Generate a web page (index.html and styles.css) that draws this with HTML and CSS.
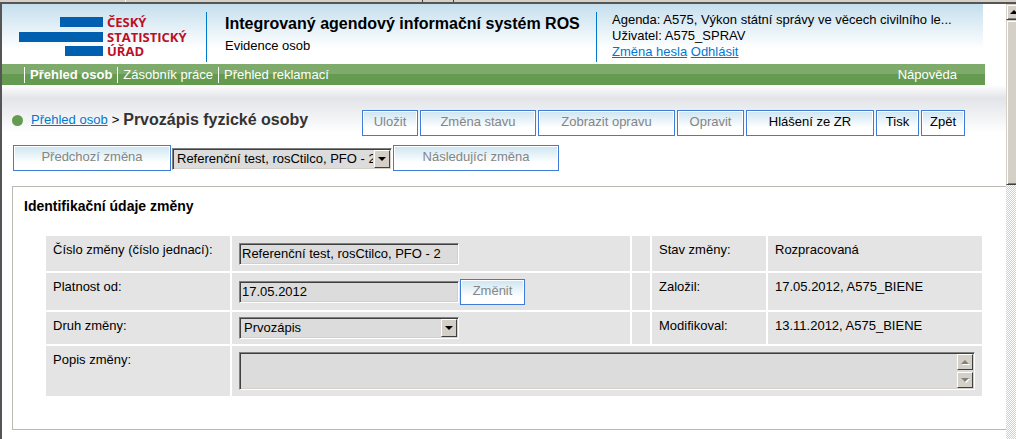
FILE: index.html
```html
<!DOCTYPE html>
<html lang="cs">
<head>
<meta charset="utf-8">
<title>Prvozápis fyzické osoby</title>
<link rel="stylesheet" href="styles.css">
</head>
<body>
<div class="chrome"><span class="chrome-tab chrome-first"></span><span class="chrome-tab chrome-second"></span><span class="chrome-tab chrome-third"></span></div>
<div class="frame">
  <div class="page">
    <header class="header">
      <svg class="logo" viewBox="0 0 204 60" role="img" aria-label="Český statistický úřad">
        <g fill="#0060af">
          <rect x="58" y="13" width="43" height="10"/>
          <rect x="17" y="28" width="84" height="10"/>
          <rect x="63" y="42" width="38" height="10"/>
        </g>
        <g class="logo-text" fill="#bd0f25">
          <text x="105" y="23">ČESKÝ</text>
          <text x="105" y="38">STATISTICKÝ</text>
          <text x="105" y="52">ÚŘAD</text>
        </g>
      </svg>
      <div class="system">
        <h1 class="system-name">Integrovaný agendový informační systém ROS</h1>
        <div>Evidence osob</div>
      </div>
      <div class="user">
        <div>Agenda: A575, Výkon státní správy ve věcech civilního le...</div>
        <div>Uživatel: A575_SPRAV</div>
        <div><a class="link" href="#">Změna hesla</a> <a class="link" href="#">Odhlásit</a></div>
      </div>
    </header>
    <nav class="nav">
      <a class="nav-item nav-active" href="#">Přehled osob</a>
      <a class="nav-item" href="#">Zásobník práce</a>
      <a class="nav-item" href="#">Přehled reklamací</a>
      <a class="nav-help" href="#">Nápověda</a>
    </nav>
    <main class="main">
      <div class="title-row">
        <div class="crumbs">
          <span class="dot"></span>
          <a class="link" href="#">Přehled osob</a>
          <span class="crumb-sep">&gt;</span>
          <h2 class="title">Prvozápis fyzické osoby</h2>
        </div>
        <div class="actions">
          <button class="btn btn-save" disabled>Uložit</button>
          <button class="btn btn-state" disabled>Změna stavu</button>
          <button class="btn btn-show" disabled>Zobrazit opravu</button>
          <button class="btn btn-fix" disabled>Opravit</button>
          <button class="btn btn-report">Hlášení ze ZR</button>
          <button class="btn btn-print">Tisk</button>
          <button class="btn btn-back">Zpět</button>
        </div>
      </div>
      <div class="change-row">
        <button class="btn btn-prev" disabled>Předchozí změna</button>
        <div class="select-box">
          <select class="field select" aria-label="Vybraná změna"><option>Referenční test, rosCtilco, PFO - 2</option></select>
          <svg class="arrow" viewBox="0 0 14 16"><path d="M3 6h8L7 10z"/></svg>
        </div>
        <button class="btn btn-next" disabled>Následující změna</button>
      </div>
      <section class="panel">
        <h3 class="panel-title">Identifikační údaje změny</h3>
        <table class="data">
          <colgroup><col class="col-label"><col><col class="col-gap"><col class="col-info"><col class="col-value"></colgroup>
          <tr class="row-number">
            <td><label for="number">Číslo změny (číslo jednací):</label></td>
            <td class="cell-field"><input class="field input" id="number" value="Referenční test, rosCtilco, PFO - 2" readonly></td>
            <td></td><td>Stav změny:</td><td>Rozpracovaná</td>
          </tr>
          <tr class="row-date">
            <td><label for="valid">Platnost od:</label></td>
            <td class="cell-field"><div class="date"><input class="field input" id="valid" value="17.05.2012" readonly><button class="btn btn-change" disabled>Změnit</button></div></td>
            <td></td><td>Založil:</td><td>17.05.2012, A575_BIENE</td>
          </tr>
          <tr class="row-kind">
            <td><label for="kind">Druh změny:</label></td>
            <td class="cell-field"><div class="select-box">
              <select class="field select" id="kind"><option>Prvozápis</option></select>
              <svg class="arrow" viewBox="0 0 14 16"><path d="M3 6h8L7 10z"/></svg>
            </div></td>
            <td></td><td>Modifikoval:</td><td>13.11.2012, A575_BIENE</td>
          </tr>
          <tr class="row-note">
            <td><label for="note">Popis změny:</label></td>
            <td class="cell-field" colspan="4"><div class="note-box">
              <textarea class="field note" id="note" readonly></textarea>
              <div class="note-scroll">
                <svg class="arrow-off" viewBox="0 0 14 14"><path class="glint" d="M4 10h8L8 6z"/><path d="M3 9h8L7 5z"/></svg>
                <svg class="arrow-off" viewBox="0 0 14 14"><path class="glint" d="M4 6h8L8 10z"/><path d="M3 5h8L7 9z"/></svg>
              </div>
            </div></td>
          </tr>
        </table>
      </section>
    </main>
  </div>
  <div class="scrollbar">
    <div class="scroll-up"><svg class="scroll-arrow" viewBox="0 0 8 4"><path d="M0 4h8L4 0z"/></svg></div>
    <div class="scroll-thumb"></div>
  </div>
</div>
</body>
</html>
```
FILE: styles.css
```css
* { box-sizing: border-box; }
body {
  margin: 0;
  min-height: 100vh;
  display: flex;
  flex-direction: column;
  overflow: hidden;
  font: 13px/16px "Liberation Sans", Arial, sans-serif;
  color: #000;
  background: #fff;
}
h1, h2, h3 { margin: 0; }
.chrome { display: flex; height: 2px; background: #d4d0c8; }
.chrome-tab { border-right: 1px solid #fff; }
.chrome-first { width: 126px; }
.chrome-second { width: 297px; border-color: #404040; }
.chrome-third { width: 31px; border-color: #404040; }
.frame {
  flex: 1;
  display: flex;
  border: solid #555;
  border-width: 2px 0 0 2px;
}
.page { flex: 1; min-width: 0; }

.header {
  display: flex;
  height: 60px;
  margin-right: 23px;
  background: linear-gradient(#c5dfed, #fff 75%);
}
.logo { width: 204px; height: 60px; flex: none; }
.logo-text { font: bold 13px "Open Sans", "Noto Sans", sans-serif; }
.system {
  width: 390px;
  margin: 8px 0 2px;
  padding: 1px 0 0 18px;
  border-left: 1px solid #0078d0;
  line-height: 22px;
  white-space: nowrap;
}
.system-name { font-size: 16px; line-height: 22px; }
.user {
  flex: 1;
  min-width: 0;
  margin: 8px 0 2px;
  padding-left: 15px;
  border-left: 1px solid #0078d0;
  white-space: nowrap;
}
.link { color: #0078d0; }

.nav {
  display: flex;
  align-items: center;
  height: 21px;
  margin-right: 21px;
  padding: 0 28px 0 22px;
  background: linear-gradient(#7eab6c 50%, #659b50 50%);
}
.nav a { color: #fff; text-decoration: none; }
.nav-item { padding: 0 5px; border-left: 1px solid #fff; }
.nav-active { font-weight: bold; }
.nav-help { margin-left: auto; }

.main {
  padding: 25px 0 0 10px;
  background: linear-gradient(#fff, #e3e4e9 13px, #fff 48px);
}
.title-row { display: flex; justify-content: space-between; padding-right: 41px; }
.crumbs { display: flex; align-items: center; height: 20px; gap: 4px; }
.dot { width: 11px; height: 11px; margin-right: 4px; border-radius: 50%; background: #659b50; }
.title { font-size: 16px; line-height: 20px; color: #333; }
.actions { display: flex; gap: 2px; }
.btn {
  height: 26px;
  padding: 0 0 2px;
  border: 1px solid #3f7bd8;
  box-shadow: inset 0 0 0 1px #fff;
  background: linear-gradient(#cde5f1, #fff 70%);
  font: inherit;
  color: #000;
  white-space: nowrap;
}
.btn:disabled { color: #858585; }
.btn-save { width: 56px; }
.btn-state { width: 116px; }
.btn-show { width: 137px; }
.btn-fix { width: 67px; }
.btn-report { width: 128px; }
.btn-print { width: 43px; }
.btn-back { width: 44px; }
.btn-prev { width: 158px; }
.btn-next { width: 166px; }
.btn-change { width: 65px; }
.change-row { display: flex; gap: 1px; align-items: center; margin-top: 9px; padding-left: 1px; }
.change-row .select-box { padding-top: 2px; }

.field {
  display: block;
  width: 100%;
  height: 22px;
  margin: 0;
  border: 1px solid;
  border-color: #808080 #fff #fff #808080;
  border-radius: 0;
  box-shadow: inset 1px 1px #404040, inset -1px -1px #d4d0c8;
  outline: 0;
  background: #dcdcdc;
  font: inherit;
  color: #000;
}
.input { width: 220px; padding: 0 2px; }
.select { appearance: none; padding: 0 18px 0 4px; }
.select-box { position: relative; width: 220px; }
.arrow {
  position: absolute;
  bottom: 2px;
  right: 2px;
  width: 16px;
  height: 18px;
}
.arrow, .arrow-off {
  border: 1px solid;
  border-color: #fff #404040 #404040 #fff;
  background: #d4d0c8;
}

.panel {
  margin-top: 15px;
  padding: 11px 22px 31px 11px;
  border: 1px solid #bcb8b2;
  border-right: 0;
}
.panel-title { font-size: 14px; line-height: 16px; }
.data {
  width: calc(100% - 20px);
  margin: 20px 0 0 20px;
  table-layout: fixed;
  border-collapse: separate;
  border-spacing: 2px;
}
.data td { padding: 6px 7px; vertical-align: top; background: #e4e4e4; }
.data .cell-field { padding-top: 5px; padding-bottom: 5px; vertical-align: middle; }
.col-label { width: 184px; }
.col-gap { width: 18px; }
.col-info { width: 114px; }
.col-value { width: 214px; }
.row-number { height: 35px; }
.row-date { height: 37px; }
.row-kind { height: 32px; }
.row-note { height: 50px; }
.date { display: flex; gap: 1px; align-items: center; }
.note-box { position: relative; }
.note { height: 38px; resize: none; }
.note-scroll {
  position: absolute;
  top: 2px;
  right: 2px;
  display: flex;
  flex-direction: column;
  gap: 2px;
}
.arrow-off { display: block; width: 16px; height: 16px; fill: #808080; }
.arrow-off .glint { fill: #fff; }

.scrollbar {
  width: 10px;
  overflow: hidden;
  background: repeating-conic-gradient(#d4d0c8 0 25%, #fff 0 50%) 0 0 / 2px 2px;
}
.scroll-up, .scroll-thumb {
  width: 16px;
  border: 1px solid;
  border-color: #d4d0c8 #404040 #404040 #d4d0c8;
  box-shadow: inset 1px 1px #fff, inset -1px -1px #808080;
  background: #d4d0c8;
}
.scroll-up { height: 16px; padding: 5px 3px; }
.scroll-thumb { height: 165px; }
.scroll-arrow { display: block; width: 8px; height: 4px; }
```
